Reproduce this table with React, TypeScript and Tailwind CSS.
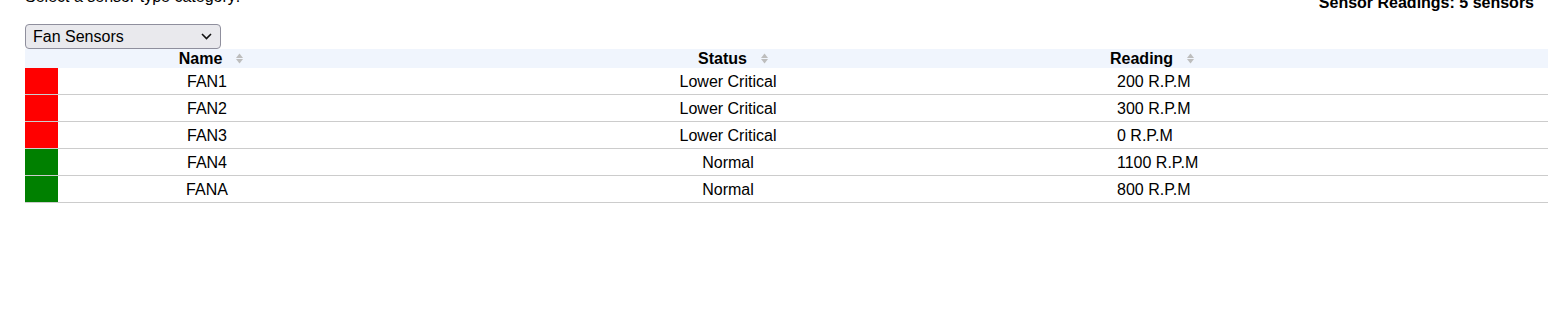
import React, { useState } from "react";

type Sensor = {
  name: string;
  status: "Lower Critical" | "Normal";
  reading: string;
};

const sensors: Sensor[] = [
  { name: "FAN1", status: "Lower Critical", reading: "200 R.P.M" },
  { name: "FAN2", status: "Lower Critical", reading: "300 R.P.M" },
  { name: "FAN3", status: "Lower Critical", reading: "0 R.P.M" },
  { name: "FAN4", status: "Normal", reading: "1100 R.P.M" },
  { name: "FANA", status: "Normal", reading: "800 R.P.M" },
];

function SortIcon() {
  return (
    <svg width="7" height="11" viewBox="0 0 7 11" className="shrink-0">
      <path d="M3.5 0.5 L7 5 L0 5 Z" fill="#bdbdbd" />
      <path d="M0 6 L7 6 L3.5 10.5 Z" fill="#bdbdbd" />
    </svg>
  );
}

export default function App() {
  const [category, setCategory] = useState("fan");

  return (
    <div className="min-h-screen bg-white text-black font-['Liberation_Sans',Arial,sans-serif] text-[16px] leading-[18px] pl-[25px] pr-[15px] overflow-hidden">
      {/* top bar */}
      <div className="flex items-start justify-between -mt-[12px]">
        <span>Select a sensor type category:</span>
        <span className="font-bold mt-[6px] mr-[14px]">Sensor Readings: 5 sensors</span>
      </div>

      {/* category picker */}
      <div className="relative w-[196px] mt-[12px]">
        <select
          value={category}
          onChange={(e) => setCategory(e.target.value)}
          className="appearance-none w-full h-[25px] pl-[7px] pr-[24px] bg-[#e9e9ed] border border-[#8f8f9d] rounded-[4px] text-[16px] leading-[18px] outline-none"
        >
          <option value="fan">Fan Sensors</option>
          <option value="temp">Temperature Sensors</option>
          <option value="volt">Voltage Sensors</option>
        </select>
        <svg
          width="11"
          height="7"
          viewBox="0 0 11 7"
          className="absolute right-[9px] top-[9px] pointer-events-none"
        >
          <path d="M1 1 L5.5 5.5 L10 1" fill="none" stroke="#111" strokeWidth="1.6" />
        </svg>
      </div>

      {/* readings table */}
      <div className="w-full">
        <div className="grid grid-cols-[33px_298px_744px_1fr] h-[19px] bg-[#f0f5fd] font-bold items-center">
          <div />
          <div className="flex items-center justify-center gap-[14px] pl-[8px]">
            <span>Name</span>
            <SortIcon />
          </div>
          <div className="flex items-center justify-center gap-[14px] pl-[10px]">
            <span>Status</span>
            <SortIcon />
          </div>
          <div className="flex items-center gap-[14px] pl-[10px]">
            <span>Reading</span>
            <SortIcon />
          </div>
        </div>

        {sensors.map((s) => (
          <div
            key={s.name}
            className="grid grid-cols-[33px_298px_744px_1fr] h-[27px] border-b border-[#cccccc]"
          >
            <div
              className={`h-full ${s.status === "Normal" ? "bg-[#008000]" : "bg-[#ff0000]"}`}
            />
            <div className="text-center pt-[5px]">{s.name}</div>
            <div className="text-center pt-[5px]">{s.status}</div>
            <div className="pl-[17px] pt-[5px]">{s.reading}</div>
          </div>
        ))}
      </div>
    </div>
  );
}
